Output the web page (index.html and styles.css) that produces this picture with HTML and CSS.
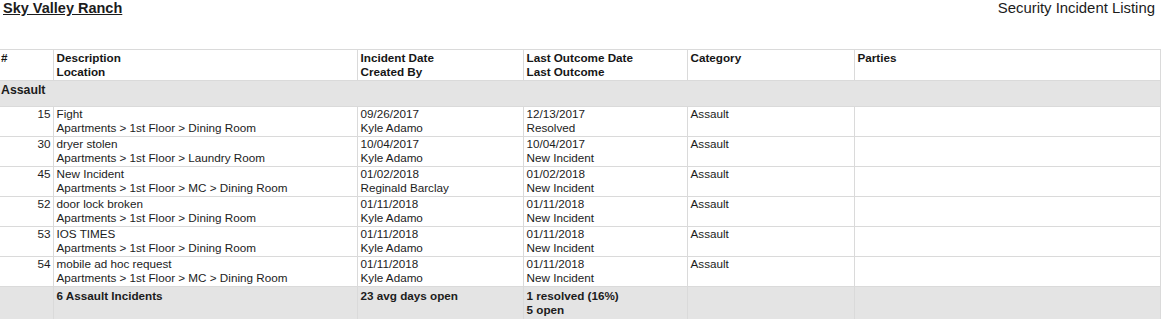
FILE: index.html
```html
<!DOCTYPE html>
<html>
<head>
<meta charset="utf-8">
<link rel="stylesheet" href="styles.css">
</head>
<body>
<div class="top">
  <div class="site">Sky Valley Ranch</div>
  <div class="report">Security Incident Listing</div>
</div>
<table class="grid">
  <colgroup>
    <col class="c1"><col class="c2"><col class="c3"><col class="c4"><col class="c5"><col class="c6">
  </colgroup>
  <thead>
    <tr class="head">
      <th>#</th>
      <th>Description<br>Location</th>
      <th>Incident Date<br>Created By</th>
      <th>Last Outcome Date<br>Last Outcome</th>
      <th>Category</th>
      <th>Parties</th>
    </tr>
  </thead>
  <tbody>
    <tr class="group"><td colspan="6">Assault</td></tr>
    <tr>
      <td class="num">15</td>
      <td>Fight<br>Apartments &gt; 1st Floor &gt; Dining Room</td>
      <td>09/26/2017<br>Kyle Adamo</td>
      <td>12/13/2017<br>Resolved</td>
      <td>Assault</td>
      <td></td>
    </tr>
    <tr>
      <td class="num">30</td>
      <td>dryer stolen<br>Apartments &gt; 1st Floor &gt; Laundry Room</td>
      <td>10/04/2017<br>Kyle Adamo</td>
      <td>10/04/2017<br>New Incident</td>
      <td>Assault</td>
      <td></td>
    </tr>
    <tr>
      <td class="num">45</td>
      <td>New Incident<br>Apartments &gt; 1st Floor &gt; MC &gt; Dining Room</td>
      <td>01/02/2018<br>Reginald Barclay</td>
      <td>01/02/2018<br>New Incident</td>
      <td>Assault</td>
      <td></td>
    </tr>
    <tr>
      <td class="num">52</td>
      <td>door lock broken<br>Apartments &gt; 1st Floor &gt; Dining Room</td>
      <td>01/11/2018<br>Kyle Adamo</td>
      <td>01/11/2018<br>New Incident</td>
      <td>Assault</td>
      <td></td>
    </tr>
    <tr>
      <td class="num">53</td>
      <td>IOS TIMES<br>Apartments &gt; 1st Floor &gt; Dining Room</td>
      <td>01/11/2018<br>Kyle Adamo</td>
      <td>01/11/2018<br>New Incident</td>
      <td>Assault</td>
      <td></td>
    </tr>
    <tr>
      <td class="num">54</td>
      <td>mobile ad hoc request<br>Apartments &gt; 1st Floor &gt; MC &gt; Dining Room</td>
      <td>01/11/2018<br>Kyle Adamo</td>
      <td>01/11/2018<br>New Incident</td>
      <td>Assault</td>
      <td></td>
    </tr>
    <tr class="total">
      <td></td>
      <td>6 Assault Incidents</td>
      <td>23 avg days open</td>
      <td>1 resolved (16%)<br>5 open</td>
      <td></td>
      <td></td>
    </tr>
  </tbody>
</table>
</body>
</html>
```
FILE: styles.css
```css
html, body {
  margin: 0;
  padding: 0;
  background: #ffffff;
}
body {
  font-family: "Liberation Sans", Arial, sans-serif;
  color: #1c1c1c;
}
.top {
  display: flex;
  justify-content: space-between;
  align-items: flex-start;
  padding: 0 8px 0 3px;
  height: 49px;
}
.site {
  font-size: 14.5px;
  line-height: 16px;
  font-weight: bold;
  text-decoration: underline;
}
.report {
  font-size: 14.9px;
  line-height: 17px;
  padding-top: 0;
}
.grid {
  border-collapse: collapse;
  table-layout: fixed;
  width: 1160px;
  font-size: 11.7px;
  line-height: 14px;
}
.c1 { width: 53px; }
.c2 { width: 304px; }
.c3 { width: 166px; }
.c4 { width: 164px; }
.c5 { width: 167px; }
.c6 { width: 306px; }
.grid th,
.grid td {
  border: 1px solid #dadada;
  padding: 0 3px 1px 3px;
  vertical-align: top;
  text-align: left;
}
.grid tr > :first-child {
  border-left: none;
  padding-left: 1px;
}
.head th {
  font-weight: bold;
  padding-top: 1px;
  padding-bottom: 1px;
  color: #161616;
}
.group td {
  background: #e4e4e4;
  font-weight: bold;
  font-size: 12.3px;
  line-height: 16px;
  height: 26px;
  padding-top: 1px;
  padding-bottom: 0;
  box-sizing: border-box;
  border-left: none;
  border-right: 1px solid #dadada;
}
.grid td.num {
  text-align: right;
  padding-right: 2px;
}
.total td {
  background: #e4e4e4;
  font-weight: bold;
  padding-top: 2px;
  padding-bottom: 8px;
}
```
